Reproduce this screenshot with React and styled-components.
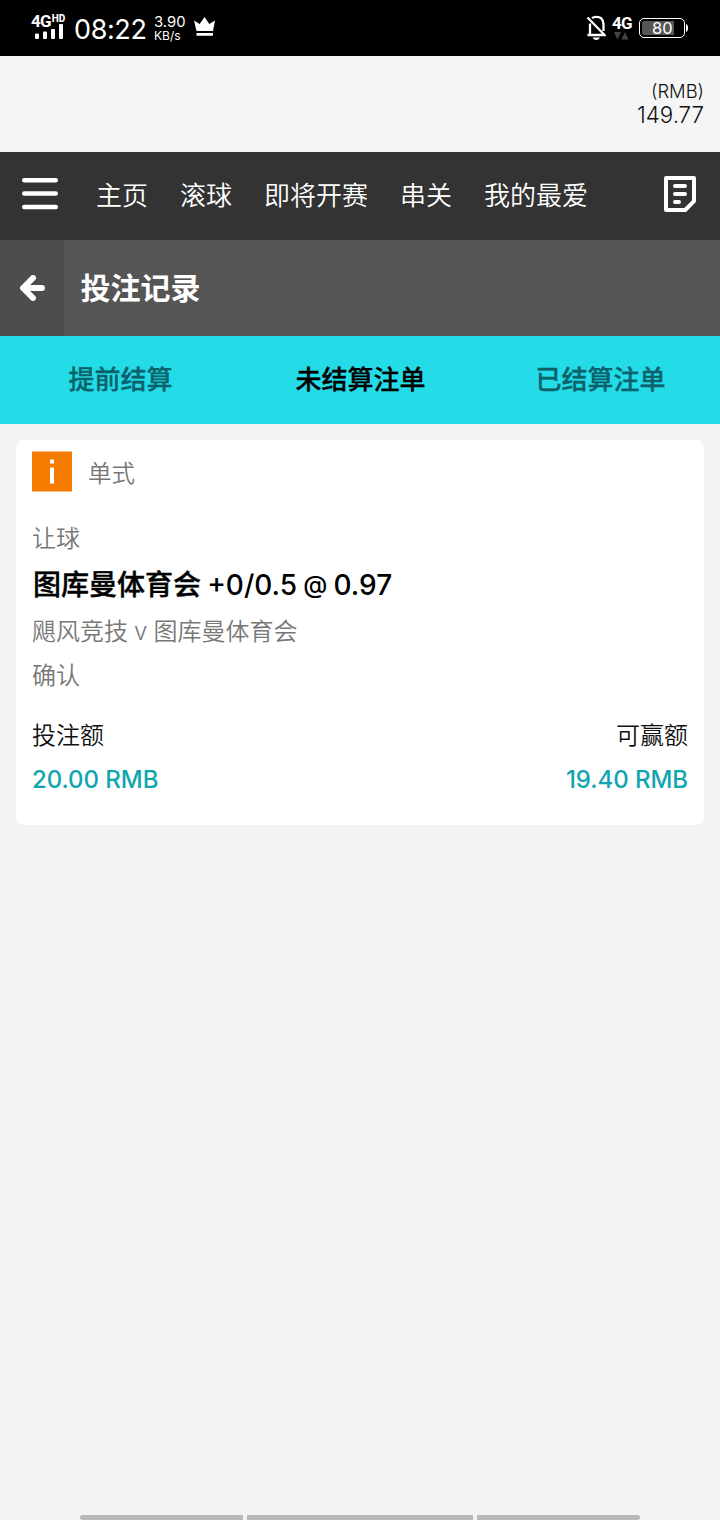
import React from "react";
import styled, { createGlobalStyle } from "styled-components";

const GlobalStyle = createGlobalStyle`
  * { box-sizing: border-box; }
  body {
    margin: 0;
    background: #f3f3f3;
    font-family: Inter, "Noto Sans CJK SC", sans-serif;
    font-weight: 350;
  }
`;

const Screen = styled.div`
  width: 720px;
  height: 1520px;
  display: flex;
  flex-direction: column;
  overflow: hidden;
  background: #f3f3f3;
`;

const StatusBar = styled.header`
  height: 56px;
  flex: none;
  display: flex;
  justify-content: space-between;
  padding: 0 32px 0 31px;
  background: #000;
  color: #fff;
`;

const StatusGroup = styled.div`
  display: flex;
  align-items: flex-start;
`;

const Signal = styled.div`
  width: 36px;
  padding-top: 14px;
`;

const NetworkRow = styled.div`
  display: flex;
  align-items: flex-start;
  height: 12px;
`;

const Network = styled.span`
  display: block;
  height: 14px;
  font-family: Roboto, sans-serif;
  font-size: 17px;
  line-height: 15px;
  font-weight: 700;
  letter-spacing: -0.8px;
`;

const NetworkTag = styled.span`
  margin-left: 1px;
  font-family: Roboto, sans-serif;
  font-size: 10px;
  line-height: 10px;
  font-weight: 800;
`;

const Clock = styled.div`
  width: 72px;
  margin-left: 7px;
  padding-top: 14px;
  font-size: 27px;
  line-height: 32px;
  font-weight: 400;
  white-space: nowrap;
  letter-spacing: -0.4px;
`;

const Speed = styled.div`
  display: flex;
  flex-direction: column;
  width: 34px;
  margin-left: 8px;
  padding-top: 15px;
  font-weight: 400;
  white-space: nowrap;
`;

const SpeedValue = styled.span`
  font-size: 14.8px;
  line-height: 14px;
`;

const SpeedUnit = styled.span`
  font-size: 12px;
  line-height: 13px;
`;

const Icon = styled.svg`
  display: block;
  flex: none;
  margin-top: ${(p) => p.$top || 0}px;
  margin-left: ${(p) => p.$left || 0}px;
`;

const DataNetwork = styled.div`
  width: 20px;
  margin-left: 5px;
  padding-top: 16px;
`;

const Battery = styled.div`
  width: 46px;
  height: 20px;
  margin: 18px 0 0 7px;
  padding: 2px;
  border: 1px solid #fff;
  border-radius: 5px;
`;

const BatteryLevel = styled.div`
  width: 32px;
  height: 14px;
  padding-left: 10px;
  background: #555;
  border-radius: 2px 0 0 2px;
  font-size: 16.5px;
  line-height: 14px;
  font-weight: 400;
`;

const Balance = styled.section`
  height: 96px;
  flex: none;
  display: flex;
  flex-direction: column;
  align-items: flex-end;
  padding: 24px 16px 0 0;
  background: #f5f5f5;
  color: #111;
  font-weight: 300;
`;

const Currency = styled.span`
  font-size: 18.4px;
  line-height: 23px;
`;

const Amount = styled.span`
  font-size: 22.3px;
  line-height: 24px;
`;

const NavBar = styled.nav`
  height: 88px;
  flex: none;
  display: flex;
  align-items: center;
  padding: 0 24px 0 22px;
  background: #333;
  color: #fff;
`;

const NavLinks = styled.div`
  flex: 1;
  display: flex;
  gap: 32px;
  margin-left: 38px;
`;

const NavLink = styled.span`
  font-size: 26px;
  line-height: 40px;
`;

const TitleBar = styled.div`
  height: 96px;
  flex: none;
  display: flex;
  background: #555;
  color: #fff;
`;

const BackButton = styled.div`
  width: 64px;
  display: flex;
  align-items: center;
  justify-content: center;
  background: #4d4d4d;
`;

const Title = styled.h1`
  margin: 0 0 0 16.5px;
  font-size: 30px;
  line-height: 96px;
  font-weight: 700;
`;

const Tabs = styled.div`
  height: 88px;
  flex: none;
  display: grid;
  grid-template-columns: repeat(3, 1fr);
  background: #24dce8;
`;

const Tab = styled.div`
  padding-left: 1px;
  text-align: center;
  font-size: 26px;
  line-height: 87px;
  font-weight: 500;
  color: ${(p) => (p.$active ? "#000" : "#0b626a")};
  -webkit-text-stroke: 0.3px currentColor;
`;

const Card = styled.article`
  height: 385px;
  margin: 16px 16px 0;
  padding: 11px 16px 0;
  background: #fff;
  border-radius: 8px;
`;

const CardHeader = styled.div`
  display: flex;
  gap: 16px;
  height: 66px;
`;

const Line = styled.div`
  display: flex;
  justify-content: space-between;
  height: ${(p) => p.$height || 44}px;
  line-height: ${(p) => p.$height || 44}px;
  margin-top: ${(p) => p.$gap || 0}px;
  font-size: 24px;
  color: ${(p) => p.$color || "#777"};
  white-space: pre;
  word-spacing: -0.7px;
`;

const BetType = styled(Line)`
  line-height: 46px;
  font-size: 23.5px;
`;

const Selection = styled(Line)`
  display: block;
  padding-left: 1px;
  font-size: 28px;
  font-weight: 500;
  word-spacing: -1.3px;
`;

const Team = styled.span`
  -webkit-text-stroke: 0.4px currentColor;
`;

const At = styled.span`
  position: relative;
  top: -2px;
  font-size: 24.5px;
`;

const Money = styled(Line)`
  font-weight: 500;
  word-spacing: 0;
  letter-spacing: -0.05px;
`;

const GestureBar = styled.footer`
  display: grid;
  grid-template-columns: 163px 226px 163px;
  gap: 4px;
  justify-content: center;
  height: 5px;
  margin-top: auto;
`;

const GestureSegment = styled.div`
  background: #b8b8b8;
  border-radius: ${(p) => p.$radius || 0};
`;

const LINKS = ["主页", "滚球", "即将开赛", "串关", "我的最爱"];

export default function App() {
  return (
    <Screen>
      <GlobalStyle />
      <StatusBar>
        <StatusGroup>
          <Signal>
            <NetworkRow>
              <Network>4G</Network>
              <NetworkTag>HD</NetworkTag>
            </NetworkRow>
            <Icon width="36" height="16" viewBox="0 0 36 16" $top={-2}>
              <rect x="4" y="9.500" width="4" height="5.500" rx="1" fill="#fff" />
              <rect x="12" y="7.500" width="4" height="7.500" rx="1" fill="#fff" />
              <rect x="20" y="5" width="4" height="10" rx="1" fill="#fff" />
              <rect x="28" y="0" width="4" height="15" rx="1" fill="#fff" />
            </Icon>
          </Signal>
          <Clock>08:22</Clock>
          <Speed>
            <SpeedValue>3.90</SpeedValue>
            <SpeedUnit>KB/s</SpeedUnit>
          </Speed>
          <Icon width="22" height="20" viewBox="0 0 22 20" $top={17} $left={6}>
            <path d="M0 3.500 5.700 7 10.500 0l4.800 7L21 3.500 19 14H2.500zM2.500 16H19v2.700H2.500z" fill="#fff" />
          </Icon>
        </StatusGroup>
        <StatusGroup>
          <Icon width="21" height="26" viewBox="0 0 21 26" $top={15}>
            <path d="M4 19V8.500M6 3.200C8 1.400 13 1.400 15 3.200Q17.500 5.500 17.500 9v7M1.500 20h16M1.500 2.500l18 18.500" fill="none" stroke="#fff" strokeWidth="2.300" />
            <path d="M6.500 22.500H14q-1.200 2.500-3.750 2.500t-3.750-2.500z" fill="#fff" />
          </Icon>
          <DataNetwork>
            <Network>4G</Network>
            <Icon width="16" height="8" viewBox="0 0 16 8" $left={2} $top={2}>
              <path d="M0 0h7L3.500 7.500zM7.500 7.500h7L11 0z" fill="#444" />
            </Icon>
          </DataNetwork>
          <Battery>
            <BatteryLevel>80</BatteryLevel>
          </Battery>
          <Icon width="3" height="8" viewBox="0 0 3 8" $top={24}>
            <path d="M1 0q2 .5 2 4T1 8z" fill="#fff" />
          </Icon>
        </StatusGroup>
      </StatusBar>

      <Balance>
        <Currency>(RMB)</Currency>
        <Amount>149.77</Amount>
      </Balance>

      <NavBar>
        <Icon width="36" height="32" viewBox="0 0 36 32" $top={-4}>
          <path d="M2.200 2.300h31.600M2.200 15.500h31.600M2.200 29h31.600" stroke="#fff" strokeWidth="4.400" strokeLinecap="round" />
        </Icon>
        <NavLinks>
          {LINKS.map((label) => (
            <NavLink key={label}>{label}</NavLink>
          ))}
        </NavLinks>
        <Icon width="32" height="36" viewBox="0 0 32 36" $top={-4}>
          <path d="M2 2h28v23.200L21.200 34H2z" fill="none" stroke="#fff" strokeWidth="4" strokeLinejoin="round" />
          <path d="M11 10h10M11 18h10M11 26h4" stroke="#fff" strokeWidth="4" strokeLinecap="round" />
        </Icon>
      </NavBar>

      <TitleBar>
        <BackButton>
          <Icon width="26" height="26" viewBox="0 0 26 26" $left={1}>
            <path d="M13 3 3 13l10 10M3.500 13H22" fill="none" stroke="#fff" strokeWidth="6" strokeLinecap="round" strokeLinejoin="round" />
          </Icon>
        </BackButton>
        <Title>投注记录</Title>
      </TitleBar>

      <Tabs>
        <Tab>提前结算</Tab>
        <Tab $active>未结算注单</Tab>
        <Tab>已结算注单</Tab>
      </Tabs>

      <Card>
        <CardHeader>
          <Icon width="40" height="41" viewBox="0 0 40 41">
            <path d="M0 .5h40v40H0z" fill="#f57c00" />
            <path d="M18 8.500h4v4h-4zM18 16.500h4v16h-4z" fill="#fff" />
          </Icon>
          <BetType>单式</BetType>
        </CardHeader>
        <Line>让球</Line>
        <Selection $height={48} $color="#000">
          <Team>图库曼体育会</Team> +0/0.5 <At>@</At> 0.97
        </Selection>
        <Line $gap={1}>飓风竞技 v 图库曼体育会</Line>
        <Line>确认</Line>
        <Line $gap={16} $color="#111">
          <span>投注额</span>
          <span>可赢额</span>
        </Line>
        <Money $color="#11a5af">
          <span>20.00 RMB</span>
          <span>19.40 RMB</span>
        </Money>
      </Card>

      <GestureBar>
        <GestureSegment $radius="3px 0 0 3px" />
        <GestureSegment />
        <GestureSegment $radius="0 3px 3px 0" />
      </GestureBar>
    </Screen>
  );
}
